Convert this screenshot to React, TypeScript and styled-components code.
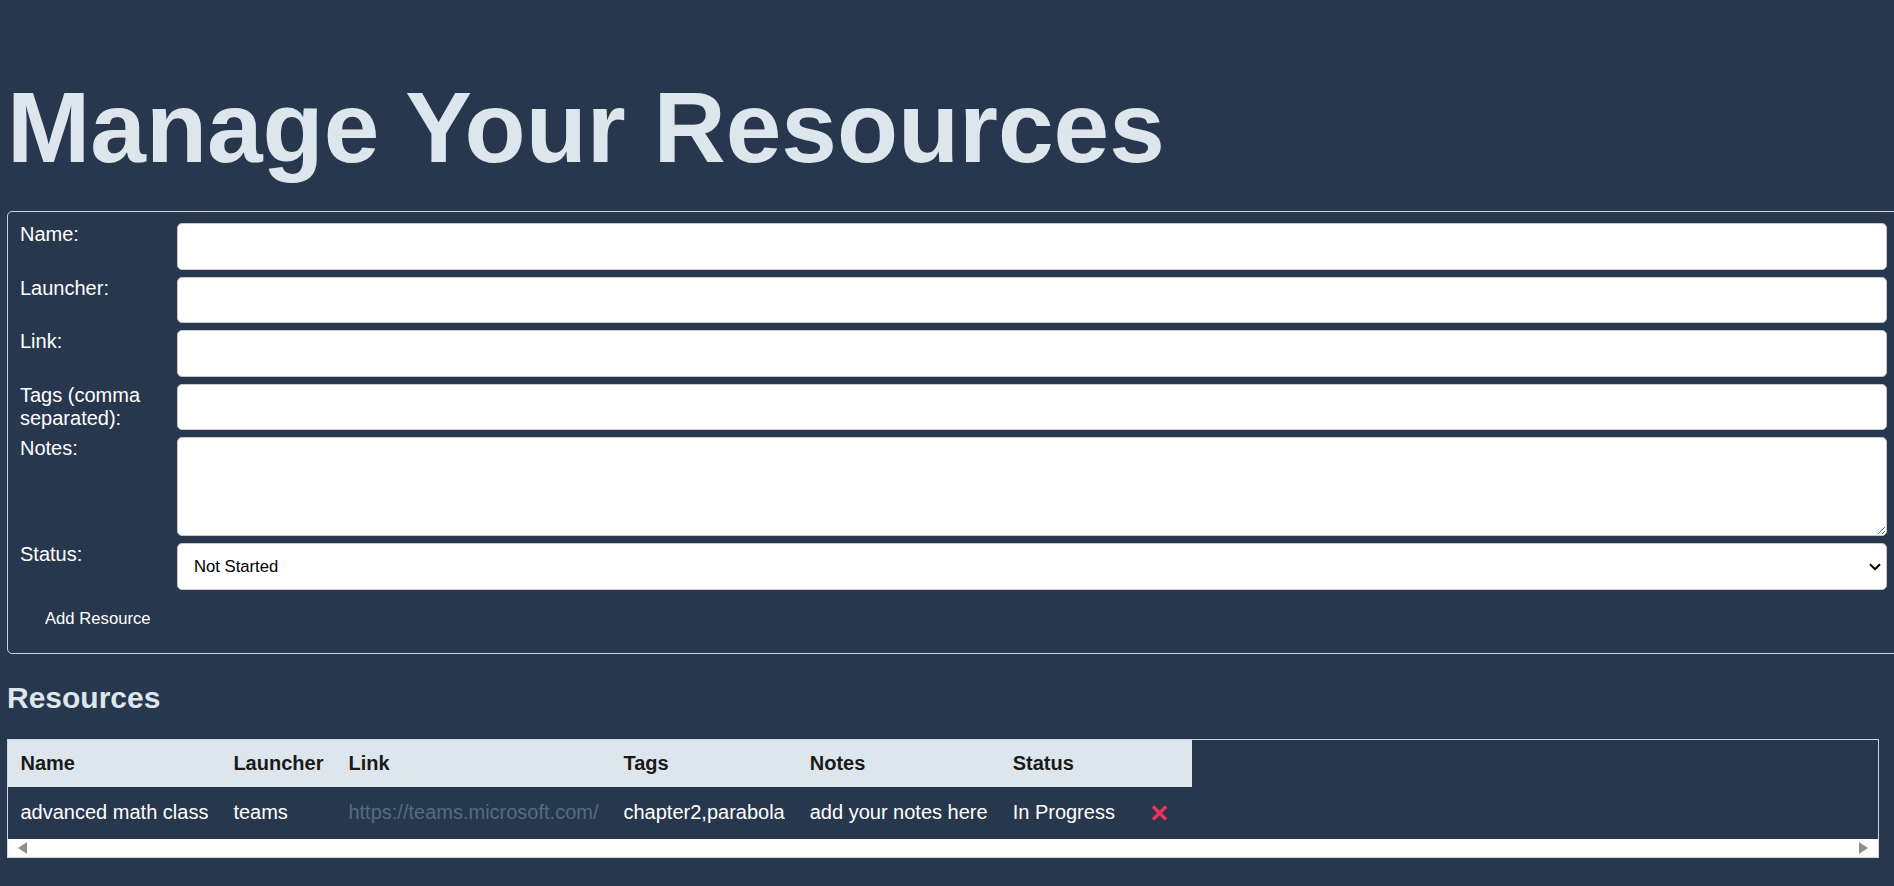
import React from "react";
import styled, { createGlobalStyle } from "styled-components";

const GlobalStyle = createGlobalStyle`
  html, body {
    margin: 0;
    padding: 0;
    background: #27374d;
    overflow-x: hidden;
  }
  body {
    font-family: "Liberation Sans", Arial, sans-serif;
  }
`;

const Page = styled.div`
  padding: 0 7px 8px 7px;
  color: #ffffff;
  font-size: 20px;
`;

const Title = styled.h1`
  margin: 70px 0 26px;
  font-size: 100px;
  line-height: 1.15;
  font-weight: 700;
  color: #dde6ed;
`;

const Form = styled.form`
  display: grid;
  grid-template-columns: 145px 1fr;
  column-gap: 12px;
  row-gap: 7px;
  width: calc(100% + 13px);
  box-sizing: border-box;
  border: 1px solid #c9ced4;
  border-radius: 5px;
  padding: 11px 12px 12px;
  margin: 0;
`;

const Label = styled.label`
  font-size: 20px;
  line-height: normal;
  color: #ffffff;
`;

const fieldBase = `
  box-sizing: border-box;
  width: 100%;
  border: 1px solid #c8c8c8;
  border-radius: 5px;
  background: #ffffff;
  font-family: "Liberation Sans", Arial, sans-serif;
  font-size: 16.67px;
  color: #000000;
  margin: 0;
`;

const TextInput = styled.input`
  ${fieldBase}
  height: 46.5px;
  padding: 0 16px;
`;

const NotesArea = styled.textarea`
  ${fieldBase}
  height: 99px;
  padding: 10px 16px;
  resize: vertical;
`;

const SelectWrap = styled.div`
  position: relative;
`;

const Select = styled.select`
  ${fieldBase}
  height: 47px;
  padding: 0 16px;
  appearance: none;
  -webkit-appearance: none;
`;

const Chevron = styled.svg`
  position: absolute;
  right: 6px;
  top: 20px;
  pointer-events: none;
`;

const ButtonRow = styled.div`
  grid-column: 1 / -1;
  justify-self: start;
`;

const AddButton = styled.button`
  background: transparent;
  border: none;
  color: #ffffff;
  font-family: "Liberation Sans", Arial, sans-serif;
  font-size: 16.67px;
  line-height: normal;
  padding: 12px 25px;
  cursor: pointer;
`;

const Heading = styled.h2`
  margin: 27px 0 23.5px;
  font-size: 30px;
  font-weight: 700;
  line-height: normal;
  color: #dde6ed;
`;

const TableWrap = styled.div`
  border: 1px solid #cfd5db;
  margin-right: 8px;
`;

const Scroller = styled.div`
  overflow-x: auto;
`;

const Table = styled.table`
  border-collapse: collapse;
  font-size: 20px;
`;

const Th = styled.th`
  background: #dde6ed;
  color: #1a1a1a;
  padding: 12px 12.5px;
  text-align: left;
  font-weight: 700;
  white-space: nowrap;
  line-height: 23px;
`;

const Td = styled.td`
  padding: 12px 12.5px;
  color: #ffffff;
  white-space: nowrap;
  vertical-align: middle;
  line-height: 23px;
`;

const Link = styled.a`
  color: #526d82;
  text-decoration: none;
`;

const DeleteButton = styled.button`
  display: flex;
  align-items: center;
  justify-content: center;
  width: 40px;
  height: 28px;
  padding: 0;
  border: none;
  background: transparent;
  cursor: pointer;
`;

const ScrollStrip = styled.div`
  height: 18px;
  background: #ffffff;
  display: flex;
  align-items: center;
  justify-content: space-between;
  padding: 0 10px;
`;

const Arrow = styled.span<{ $dir: "left" | "right" }>`
  width: 0;
  height: 0;
  border-top: 6px solid transparent;
  border-bottom: 6px solid transparent;
  ${(p) =>
    p.$dir === "left"
      ? "border-right: 9px solid #8e8e8e;"
      : "border-left: 9px solid #8e8e8e;"}
`;

type Resource = {
  name: string;
  launcher: string;
  link: string;
  tags: string;
  notes: string;
  status: string;
};

const resources: Resource[] = [
  {
    name: "advanced math class",
    launcher: "teams",
    link: "https://teams.microsoft.com/",
    tags: "chapter2,parabola",
    notes: "add your notes here",
    status: "In Progress",
  },
];

const fields = [
  { id: "name", label: "Name:" },
  { id: "launcher", label: "Launcher:" },
  { id: "link", label: "Link:" },
  { id: "tags", label: "Tags (comma separated):" },
];

export default function App() {
  return (
    <>
      <GlobalStyle />
      <Page>
        <Title>Manage Your Resources</Title>
        <Form onSubmit={(e) => e.preventDefault()}>
          {fields.map((f) => (
            <React.Fragment key={f.id}>
              <Label htmlFor={f.id}>{f.label}</Label>
              <TextInput id={f.id} type="text" />
            </React.Fragment>
          ))}
          <Label htmlFor="notes">Notes:</Label>
          <NotesArea id="notes" />
          <Label htmlFor="status">Status:</Label>
          <SelectWrap>
            <Select id="status" defaultValue="Not Started">
              <option>Not Started</option>
              <option>In Progress</option>
              <option>Completed</option>
            </Select>
            <Chevron width="12" height="8" viewBox="0 0 12 8">
              <path d="M1 1.2 L6 6.2 L11 1.2" fill="none" stroke="#000" strokeWidth="2" />
            </Chevron>
          </SelectWrap>
          <ButtonRow>
            <AddButton type="submit">Add Resource</AddButton>
          </ButtonRow>
        </Form>
        <Heading>Resources</Heading>
        <TableWrap>
          <Scroller>
            <Table>
              <thead>
                <tr>
                  <Th>Name</Th>
                  <Th>Launcher</Th>
                  <Th>Link</Th>
                  <Th>Tags</Th>
                  <Th>Notes</Th>
                  <Th>Status</Th>
                  <Th />
                </tr>
              </thead>
              <tbody>
                {resources.map((r) => (
                  <tr key={r.name}>
                    <Td>{r.name}</Td>
                    <Td>{r.launcher}</Td>
                    <Td>
                      <Link href={r.link}>{r.link}</Link>
                    </Td>
                    <Td>{r.tags}</Td>
                    <Td>{r.notes}</Td>
                    <Td>{r.status}</Td>
                    <Td>
                      <DeleteButton aria-label="Delete">
                        <svg width="17" height="16" viewBox="0 0 17 16">
                          <path
                            d="M2 1.5 L15 14.5 M15 1.5 L2 14.5"
                            stroke="#ee3158"
                            strokeWidth="3.4"
                            fill="none"
                          />
                        </svg>
                      </DeleteButton>
                    </Td>
                  </tr>
                ))}
              </tbody>
            </Table>
          </Scroller>
          <ScrollStrip>
            <Arrow $dir="left" />
            <Arrow $dir="right" />
          </ScrollStrip>
        </TableWrap>
      </Page>
    </>
  );
}
